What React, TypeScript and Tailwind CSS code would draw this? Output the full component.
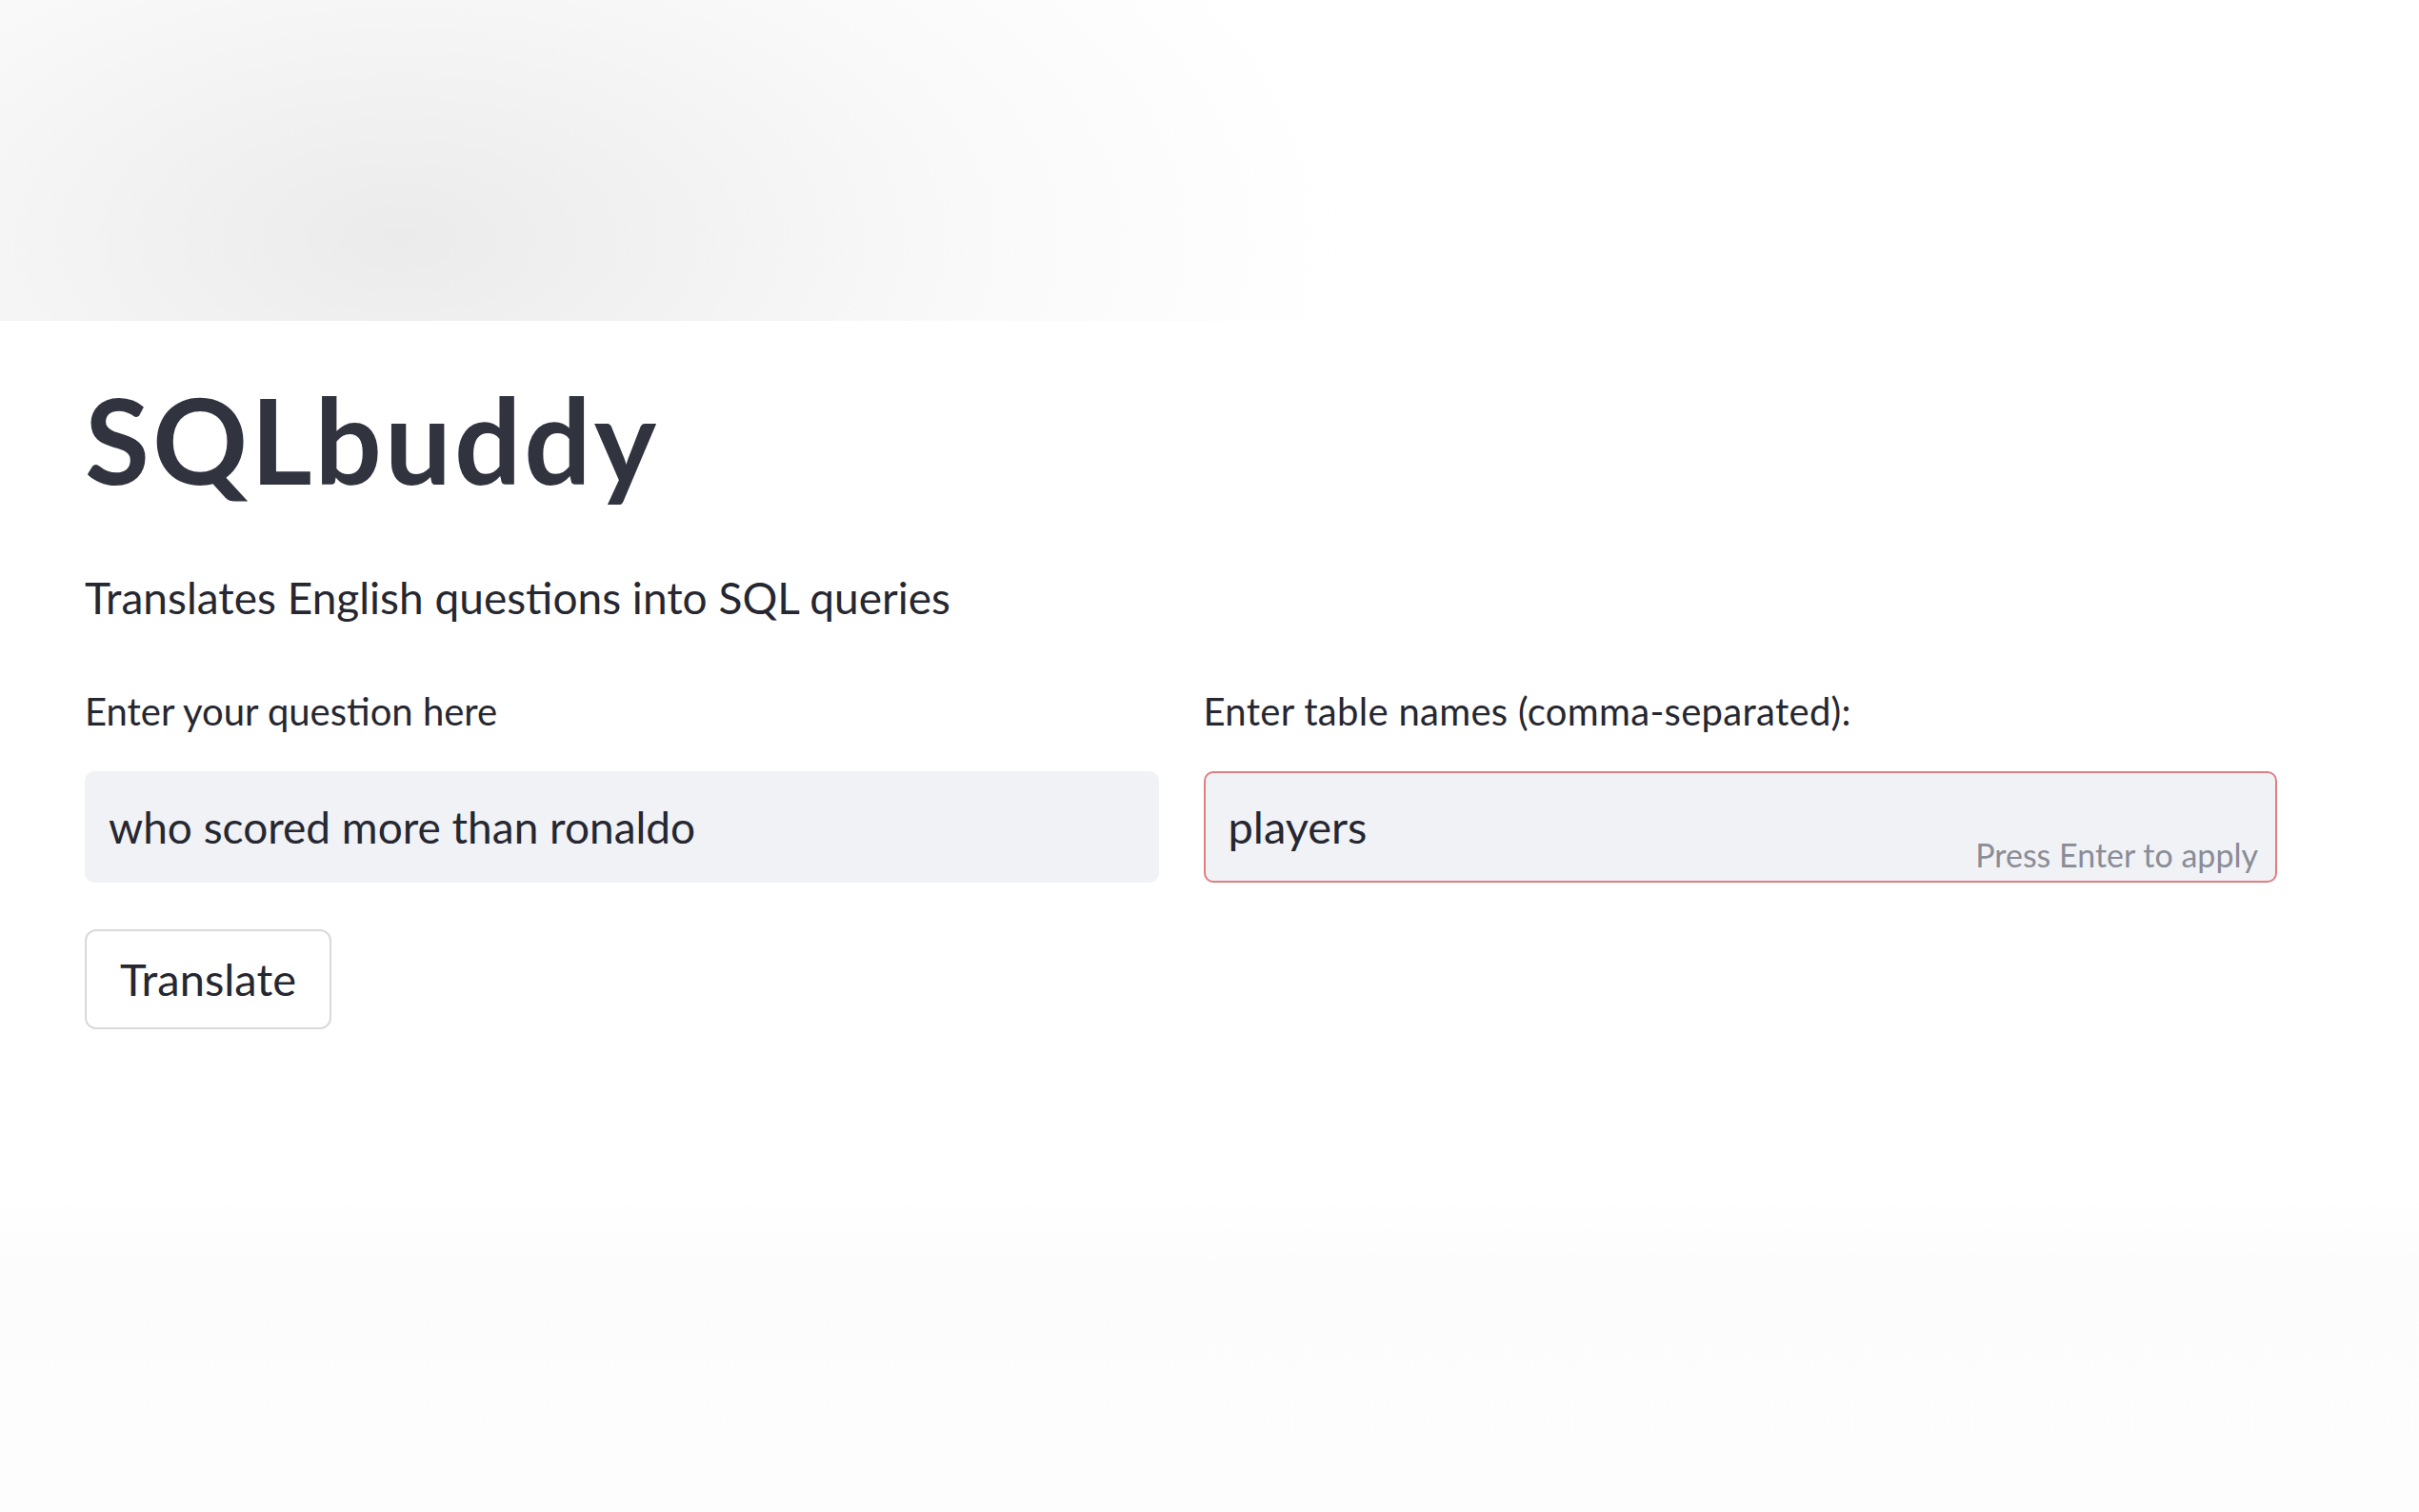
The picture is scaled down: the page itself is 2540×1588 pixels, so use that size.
import React from "react";

export default function App() {
  return (
    <div className="flex h-[1588px] w-[2540px] flex-col overflow-hidden bg-white font-['Lato','Noto_Sans',sans-serif] text-[#31333f]">
      <div className="h-[337px] w-full shrink-0 bg-[radial-gradient(ellipse_1000px_540px_at_420px_250px,#ebebeb_0%,#f2f2f2_30%,#f9f9f9_60%,#ffffff_100%)]" />
      <main className="ml-[89px] flex w-[2302px] flex-col">
        <h1 className="mt-[50px] text-[124px] font-bold leading-[1.2] tracking-[3px] text-[#31333f]">SQLbuddy</h1>
        <p className="mt-[64px] text-[46px] leading-[1.2] text-[#262730]">Translates English questions into SQL queries</p>
        <div className="mt-[68px] grid grid-cols-2 gap-x-[47px]">
          <div className="flex flex-col">
            <label className="text-[40px] leading-[1.2] text-[#262730]">Enter your question here</label>
            <div className="mt-[39px] flex h-[117px] items-center rounded-[10px] border-2 border-[#f0f2f6] bg-[#f0f2f6] pl-[23px]">
              <span className="text-[46px] leading-[1.2] text-[#262730]">who scored more than ronaldo</span>
            </div>
          </div>
          <div className="flex flex-col">
            <label className="text-[40px] leading-[1.2] tracking-[0.3px] text-[#262730]">Enter table names (comma-separated):</label>
            <div className="relative mt-[39px] flex h-[117px] items-center rounded-[10px] border-2 border-[#e07e83] bg-[#f0f2f6] pl-[24px]">
              <span className="text-[47px] leading-[1.2] text-[#262730]">players</span>
              <span className="absolute bottom-[6px] right-[18px] text-[34px] leading-[1.2] text-[#8a8c96]">Press Enter to apply</span>
            </div>
          </div>
        </div>
        <div className="mt-[49px]">
          <button className="flex h-[105px] w-[259px] items-center justify-center rounded-[12px] border-2 border-[#d8d9dd] bg-white text-[47px] leading-[1.2] text-[#262730]">
            Translate
          </button>
        </div>
      </main>
      <div className="flex-1" />
      <div className="h-[340px] w-full shrink-0 bg-[linear-gradient(to_bottom,#ffffff_0%,#fcfcfc_25%,#fdfdfd_100%)]" />
    </div>
  );
}
